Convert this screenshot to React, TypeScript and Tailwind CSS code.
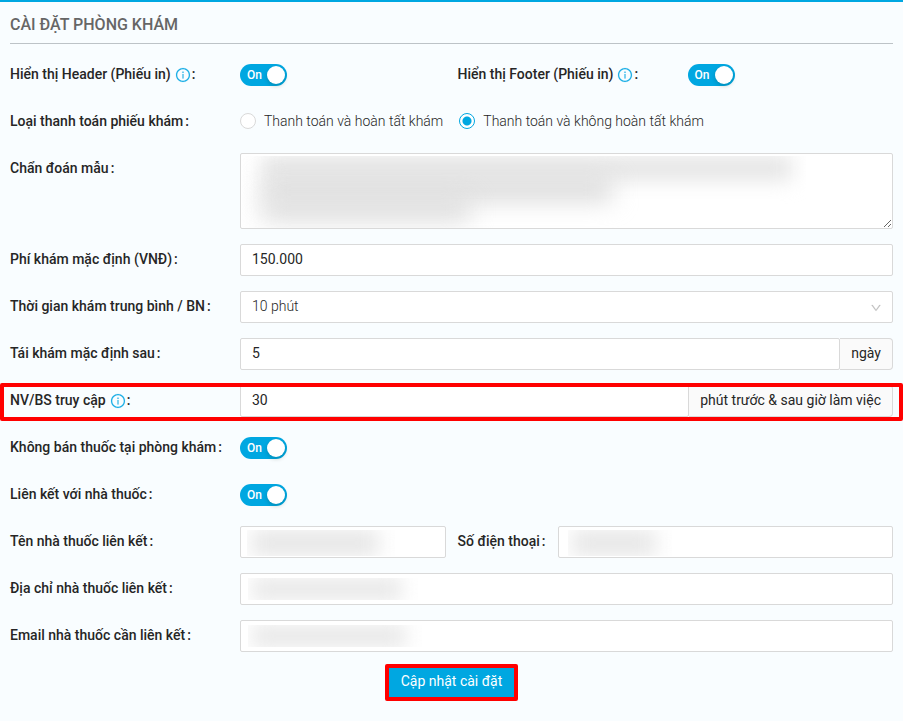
import { useState } from "react";
import type { ReactNode } from "react";
import { AiOutlineDown, AiOutlineInfoCircle } from "react-icons/ai";

const inputClass =
  "h-8 w-full min-w-0 rounded-xs border border-[#d9d9d9] bg-white px-[11px] pb-0.5 text-sm text-[#262626] outline-none focus:border-[#00a7e1]";

const addonClass =
  "flex shrink-0 items-center rounded-r-sm border border-l-0 border-[#d9d9d9] bg-[#fafafa] px-[11px] pb-0.5 text-[#262626]";

type FieldProps = {
  id: string;
  label: string;
  info?: boolean;
  short?: boolean;
  children: ReactNode;
};

function Field({ id, label, info, short, children }: FieldProps) {
  return (
    <div className="flex min-w-0 items-start">
      <label
        id={`${id}-label`}
        htmlFor={id}
        className={`flex h-[30px] shrink-0 items-center font-medium ${
          short ? "w-[100px]" : "w-[230px]"
        }`}
      >
        {label}
        {info && (
          <AiOutlineInfoCircle
            stroke="currentColor"
            strokeWidth={8}
            className="mt-0.5 ml-1 size-4 text-[#1aaee5]"
          />
        )}
        <span className={info ? "ml-px" : "ml-0.5"}>:</span>
      </label>
      <div className="relative flex min-w-0 flex-1">{children}</div>
    </div>
  );
}

function Switch({ id }: { id: string }) {
  const [on, setOn] = useState(true);
  return (
    <div className="flex h-8 items-center">
      <button
        id={id}
        type="button"
        role="switch"
        aria-checked={on}
        onClick={() => setOn(!on)}
        className={`flex h-[22px] w-[47px] items-center justify-between rounded-full pr-0.5 pl-[7px] text-xs font-medium text-white ${
          on ? "bg-[#00a7e1]" : "flex-row-reverse bg-gray-400"
        }`}
      >
        {on ? "On" : "Off"}
        <span className="size-[18px] rounded-full bg-white shadow-[0_2px_4px_rgba(0,35,11,0.2)]" />
      </button>
    </div>
  );
}

function Radio({ label, defaultChecked }: { label: string; defaultChecked?: boolean }) {
  return (
    <label className="flex h-[30px] items-center gap-2 font-light">
      <input
        type="radio"
        name="payment"
        defaultChecked={defaultChecked}
        className="size-4 appearance-none rounded-full border border-[#d9d9d9] bg-white checked:border-[#00a7e1] checked:bg-[radial-gradient(circle,#00a7e1_4px,white_5px)]"
      />
      {label}
    </label>
  );
}

function Smudge({ className }: { className: string }) {
  return (
    <div className={`pointer-events-none absolute overflow-hidden ${className}`}>
      <div className="mr-4 ml-1 h-full bg-[#e6e6e6] blur-[10px]" />
    </div>
  );
}

export default function App() {
  return (
    <main className="min-h-screen border-t-2 border-[#00a7e1] bg-[#f9fdff] px-2.5 font-['Roboto','Liberation_Sans',sans-serif] text-sm text-[#262626]">
      <h1 className="border-b border-[#bdc3c7] pt-[11px] pb-1.5 text-base leading-6 font-medium text-[#666]">
        CÀI ĐẶT PHÒNG KHÁM
      </h1>

      <form className="flex flex-col gap-[15px] pt-[15px]" onSubmit={(e) => e.preventDefault()}>
        <div className="grid grid-cols-2 gap-3">
          <Field id="header" label="Hiển thị Header (Phiếu in)" info>
            <Switch id="header" />
          </Field>
          <Field id="footer" label="Hiển thị Footer (Phiếu in)" info>
            <Switch id="footer" />
          </Field>
        </div>

        <Field id="payment" label="Loại thanh toán phiếu khám">
          <div
            id="payment"
            role="radiogroup"
            aria-labelledby="payment-label"
            className="flex h-8 gap-4"
          >
            <Radio label="Thanh toán và hoàn tất khám" />
            <Radio label="Thanh toán và không hoàn tất khám" defaultChecked />
          </div>
        </Field>

        <Field id="diagnosis" label="Chẩn đoán mẫu">
          <textarea
            id="diagnosis"
            className="block h-[76px] w-full resize rounded-xs border border-[#d9d9d9] bg-white px-[11px] py-1 outline-none focus:border-[#00a7e1]"
          />
          <div className="pointer-events-none absolute top-[3px] left-0.5 h-[72px] w-[564px] max-w-full overflow-hidden">
            <div className="ml-5 h-6 w-[530px] bg-[#e4e4e4] blur-[10px]" />
            <div className="ml-5 h-5 w-[350px] bg-[#d6d6d6] blur-[12px]" />
            <div className="ml-5 h-5 w-[208px] bg-[#dadada] blur-[12px]" />
          </div>
        </Field>

        <Field id="fee" label="Phí khám mặc định (VNĐ)">
          <input id="fee" defaultValue="150.000" className={inputClass} />
        </Field>

        <Field id="duration" label="Thời gian khám trung bình / BN">
          <select id="duration" className={`${inputClass} appearance-none font-light`}>
            <option>10 phút</option>
          </select>
          <AiOutlineDown
            stroke="currentColor"
            strokeWidth={20}
            className="pointer-events-none absolute top-[11px] right-[11px] size-3 text-[#bfbfbf]"
          />
        </Field>

        <Field id="revisit" label="Tái khám mặc định sau">
          <input id="revisit" defaultValue="5" className={inputClass} />
          <span className={addonClass}>ngày</span>
        </Field>

        <div className="relative">
          <Field id="access" label="NV/BS truy cập" info>
            <input id="access" defaultValue="30" className={inputClass} />
            <span className={addonClass}>phút trước &amp; sau giờ làm việc</span>
          </Field>
          {/* highlight frame */}
          <div className="pointer-events-none absolute -inset-x-2.5 -top-0.5 -bottom-1 rounded-xs border-4 border-[#ff0000]" />
        </div>

        <Field id="no-sale" label="Không bán thuốc tại phòng khám">
          <Switch id="no-sale" />
        </Field>

        <Field id="linked" label="Liên kết với nhà thuốc">
          <Switch id="linked" />
        </Field>

        <div className="grid grid-cols-2 gap-3">
          <Field id="pharmacy" label="Tên nhà thuốc liên kết">
            <input id="pharmacy" className={inputClass} />
            <Smudge className="top-1 left-[7px] h-[26px] w-[148px]" />
          </Field>
          <Field id="phone" label="Số điện thoại" short>
            <input id="phone" type="tel" className={inputClass} />
            <Smudge className="top-1 left-[10px] h-[26px] w-[104px]" />
          </Field>
        </div>

        <Field id="address" label="Địa chỉ nhà thuốc liên kết">
          <input id="address" className={inputClass} />
          <Smudge className="top-[5px] left-[8px] h-[22px] w-[170px]" />
        </Field>

        <Field id="email" label="Email nhà thuốc cần liên kết">
          <input id="email" type="email" className={inputClass} />
          <Smudge className="top-[5px] left-[8px] h-[22px] w-[174px]" />
        </Field>

        <div className="-mt-[3px] flex justify-center">
          <button
            type="submit"
            className="h-[37px] rounded-xs border-4 border-[#ff0000] bg-[#00a7e1] px-3 pb-1 text-white"
          >
            Cập nhật cài đặt
          </button>
        </div>
      </form>
    </main>
  );
}
